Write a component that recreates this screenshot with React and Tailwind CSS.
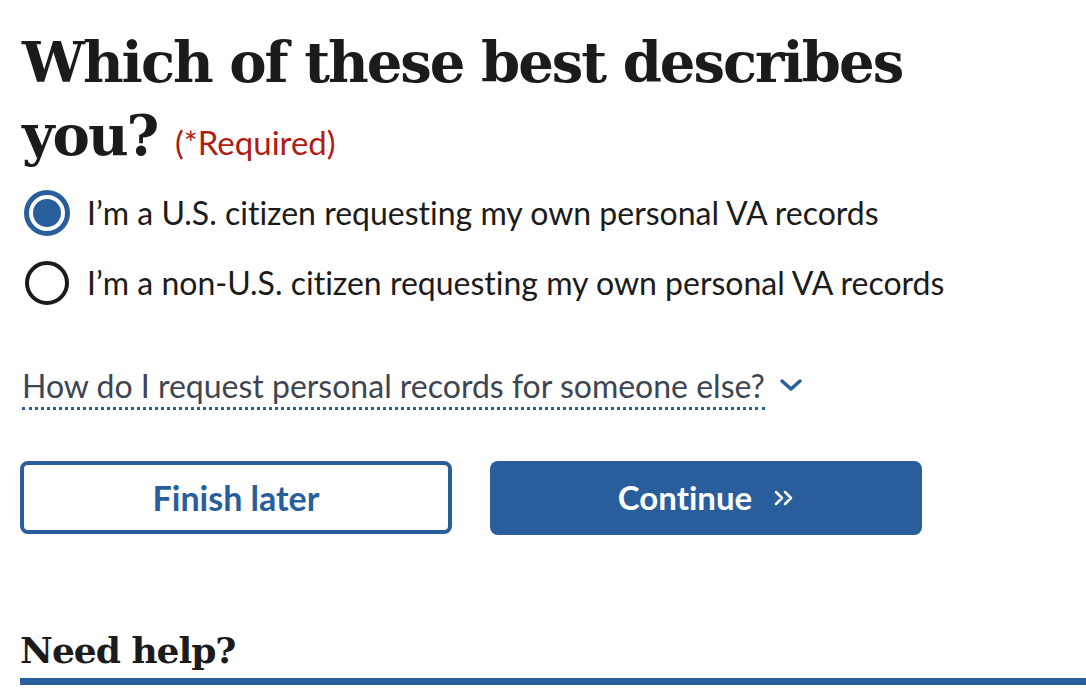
import React, { useState } from 'react';

const options = [
    'I’m a U.S. citizen requesting my own personal VA records',
    'I’m a non-U.S. citizen requesting my own personal VA records',
];

const Radio = ({ checked }) => (
    <span
        className={
            checked
                ? 'w-[46px] h-[46px] rounded-full border-[5px] border-[#295e9d] p-[4px] shrink-0 flex'
                : 'w-[44px] h-[44px] rounded-full border-[4px] border-[#1b1b1b] shrink-0 flex mx-[1px]'
        }
    >
        {checked && <span className="w-full h-full rounded-full bg-[#295e9d]"></span>}
    </span>
);

const App = () => {
    const [selected, setSelected] = useState(0);

    return (
        <div className="bg-white min-h-[692px] overflow-hidden pl-[22px] font-['Lato','Noto_Sans',sans-serif] text-[#1b1b1b] [font-variant-ligatures:none]">
            <h1 className="w-[960px] pt-[26px] font-['DejaVu_Serif',serif] font-bold text-[56px] leading-[73px] tracking-[-2px] text-[#1b1b1b]">
                Which of these best describes you?{' '}
                <span className="font-['Lato','Noto_Sans',sans-serif] font-normal text-[33px] leading-[40px] tracking-normal text-[#b01c12]">
                    (*Required)
                </span>
            </h1>

            {/* Варіанти відповіді */}
            <div className="flex flex-col gap-[24px] mt-[18px] ml-[2px]">
                {options.map((label, i) => (
                    <div
                        key={i}
                        onClick={() => setSelected(i)}
                        className="flex items-center gap-[17px] cursor-pointer h-[46px]"
                    >
                        <Radio checked={selected === i} />
                        <span className="text-[32px] leading-[46px]">{label}</span>
                    </div>
                ))}
            </div>

            <div className="mt-[60px] flex items-center gap-[14px]">
                <span className="text-[32px] leading-[40px] text-[#3d4551] border-b-[3px] border-dotted border-[#295e9d] pb-[1px]">
                    How do I request personal records for someone else?
                </span>
                <svg width="24" height="14" viewBox="0 0 24 14" className="mt-[-6px]">
                    <path d="M3 3 L12 11 L21 3" fill="none" stroke="#295e9d" strokeWidth="3.5" strokeLinecap="round" strokeLinejoin="round" />
                </svg>
            </div>

            <div className="mt-[51px] flex gap-[38px] -ml-[2px]">
                <button className="w-[432px] h-[73px] rounded-[8px] border-[4px] border-[#295e9d] bg-white text-[#295e9d] font-bold text-[34px]">
                    Finish later
                </button>
                <button className="w-[432px] h-[74px] rounded-[8px] bg-[#295e9d] text-white font-bold text-[33px] flex items-center justify-center gap-[22px]">
                    Continue
                    <svg width="20" height="16" viewBox="0 0 20 16">
                        <path d="M2 2 L8 8 L2 14 M11 2 L17 8 L11 14" fill="none" stroke="white" strokeWidth="2.5" strokeLinecap="round" strokeLinejoin="round" />
                    </svg>
                </button>
            </div>

            <h2 className="mt-[93px] font-['DejaVu_Serif',serif] font-bold text-[36px] leading-[44px] tracking-[-1px] -ml-[2px]">
                Need help?
            </h2>
            <div className="h-[7px] bg-[#295e9d] mt-[6px] -ml-[2px]"></div>
        </div>
    );
};

export default App;
